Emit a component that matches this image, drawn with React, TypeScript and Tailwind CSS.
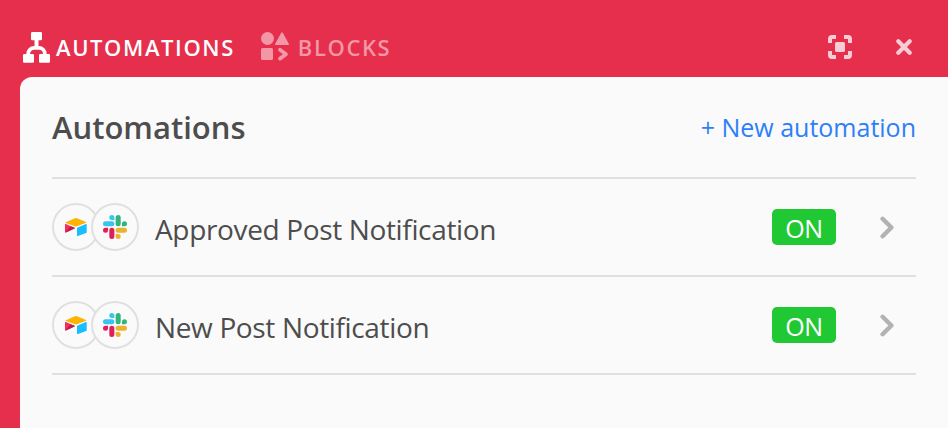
const FONT = "font-['Segoe_UI','Open_Sans','Noto_Sans',sans-serif]";

function AutomationsIcon() {
  return (
    <svg width="27" height="31" viewBox="0 0 27 31" fill="#fff">
      <rect x="8" y="0" width="11" height="8.3" rx="1.2" />
      <path d="M13.5 7v9" stroke="#fff" strokeWidth="4" />
      <path d="M5.2 23v-1.2a6 6 0 0 1 6-6h4.6a6 6 0 0 1 6 6V23" fill="none" stroke="#fff" strokeWidth="3.8" />
      <rect x="0" y="22" width="11" height="8.7" rx="1.2" />
      <rect x="16" y="22" width="11" height="8.7" rx="1.2" />
    </svg>
  );
}

function BlocksIcon() {
  return (
    <svg width="28" height="30" viewBox="0 0 28 30" fill="#f397a6">
      <circle cx="6.5" cy="6.5" r="6.5" />
      <path d="M21 1.2l6 11H15z" stroke="#f397a6" strokeWidth="1.8" strokeLinejoin="round" />
      <rect x="0" y="16" width="12" height="12" rx="1.5" />
      <path d="M19 17.8l6 4.4-6 4.4" fill="none" stroke="#f397a6" strokeWidth="3.8" strokeLinecap="round" strokeLinejoin="round" />
    </svg>
  );
}

function FocusIcon() {
  return (
    <svg width="24" height="24" viewBox="0 0 24 24" fill="none" stroke="#f8ccd4" strokeWidth="4">
      <path d="M2 8V4a2 2 0 0 1 2-2h4M16 2h4a2 2 0 0 1 2 2v4M22 16v4a2 2 0 0 1-2 2h-4M8 22H4a2 2 0 0 1-2-2v-4" />
      <rect x="7" y="7" width="10" height="10" rx="1.5" fill="#f8ccd4" stroke="none" />
    </svg>
  );
}

function CloseIcon() {
  return (
    <svg width="16" height="16" viewBox="0 0 16 16" fill="none" stroke="#f8ccd4" strokeWidth="4.2" strokeLinecap="round">
      <path d="M2.3 2.3l11.4 11.4M13.7 2.3L2.3 13.7" />
    </svg>
  );
}

function AirtableLogo() {
  return (
    <svg width="22" height="18" viewBox="0 0 22 18">
      <path d="M.8 4.2L10 .3q1-.4 2 0l9 3.6q.7.4 0 .8l-9 3.6q-1 .4-2 0L.8 5q-.7-.4 0-.8z" fill="#fcb400" />
      <path d="M12 10.3q0-.6.6-.9L21 6.1q.7-.2.7.5v7.6q0 .5-.5.7l-8.5 3.2q-.7.2-.7-.5z" fill="#18bfff" />
      <path d="M0 6.6q0-.8.8-.5l8.7 3.7q.8.4 0 .8L.9 14.4q-.9.4-.9-.5z" fill="#f82b60" />
      <path d="M.2 14.4l5.4-6.2 3.9 1.6q.8.4 0 .8L.9 14.4z" fill="#ba1e45" />
    </svg>
  );
}

function SlackLogo() {
  return (
    <svg width="24" height="24" viewBox="0 0 24 24">
      <path fill="#e01e5a" d="M5.042 15.165a2.528 2.528 0 0 1-2.52 2.523A2.528 2.528 0 0 1 0 15.165a2.527 2.527 0 0 1 2.522-2.52h2.52v2.52zM6.313 15.165a2.527 2.527 0 0 1 2.521-2.52 2.527 2.527 0 0 1 2.521 2.52v6.313A2.528 2.528 0 0 1 8.834 24a2.528 2.528 0 0 1-2.521-2.522v-6.313z" />
      <path fill="#36c5f0" d="M8.834 5.042a2.528 2.528 0 0 1-2.521-2.52A2.528 2.528 0 0 1 8.834 0a2.528 2.528 0 0 1 2.521 2.522v2.52H8.834zM8.834 6.313a2.528 2.528 0 0 1 2.521 2.521 2.528 2.528 0 0 1-2.521 2.521H2.522A2.528 2.528 0 0 1 0 8.834a2.528 2.528 0 0 1 2.522-2.521h6.312z" />
      <path fill="#2eb67d" d="M18.956 8.834a2.528 2.528 0 0 1 2.522-2.521A2.528 2.528 0 0 1 24 8.834a2.528 2.528 0 0 1-2.522 2.521h-2.522V8.834zM17.688 8.834a2.528 2.528 0 0 1-2.523 2.521 2.527 2.527 0 0 1-2.52-2.521V2.522A2.527 2.527 0 0 1 15.165 0a2.528 2.528 0 0 1 2.523 2.522v6.312z" />
      <path fill="#ecb22e" d="M15.165 18.956a2.528 2.528 0 0 1 2.523 2.522A2.528 2.528 0 0 1 15.165 24a2.527 2.527 0 0 1-2.52-2.522v-2.522h2.52zM15.165 17.688a2.527 2.527 0 0 1-2.52-2.523 2.526 2.526 0 0 1 2.52-2.52h6.313A2.527 2.527 0 0 1 24 15.165a2.528 2.528 0 0 1-2.522 2.523h-6.313z" />
    </svg>
  );
}

function AutomationRow({ name }: { name: string }) {
  return (
    <li className="flex h-[98px] items-center border-b-2 border-[#e0e0e0]">
      <div className="flex">
        <span className="flex size-12 items-center justify-center rounded-full border-2 border-[#e0e0e0]">
          <AirtableLogo />
        </span>
        <span className="-ml-[9px] flex size-12 items-center justify-center rounded-full border-2 border-[#e0e0e0] bg-[#fafafa]">
          <SlackLogo />
        </span>
      </div>
      <span className="ml-4 pt-[3px] text-[28px] leading-9 tracking-[-0.35px] whitespace-nowrap text-[#4d4d4d]">{name}</span>
      <span className="ml-auto flex h-9 w-16 items-center justify-center rounded-[5px] bg-[#20c933] pt-0.5 text-[25px] leading-9 tracking-[-0.3px] text-white">
        ON
      </span>
      <svg className="mr-[21px] ml-[44px]" width="15" height="23" viewBox="0 0 15 23" fill="none" stroke="#b2b2b2" strokeWidth="4.4" strokeLinecap="round" strokeLinejoin="round">
        <path d="M2.6 2.8l8.8 8.7-8.8 8.7" />
      </svg>
    </li>
  );
}

export default function App() {
  return (
    <div className={`flex h-[428px] w-[948px] flex-col overflow-hidden bg-[#e62e4d] pl-5 ${FONT}`}>
      <header className="flex h-[77px] items-center pt-[17px] pl-[3px]">
        <div className="flex items-center text-white">
          <AutomationsIcon />
          <span className="ml-[6px] text-[22px] leading-8 font-semibold tracking-[1.6px]">AUTOMATIONS</span>
        </div>
        <div className="ml-[26px] flex items-center text-[#f397a6]">
          <BlocksIcon />
          <span className="ml-[9px] text-[22px] leading-8 font-semibold tracking-[1.6px]">BLOCKS</span>
        </div>
        <div className="mr-9 ml-auto flex items-center gap-11">
          <FocusIcon />
          <CloseIcon />
        </div>
      </header>
      <main className="flex-1 rounded-tl-xl bg-[#fafafa] pr-8 pl-8">
        <div className="flex h-[102px] items-center justify-between border-b-2 border-[#e0e0e0]">
          <h1 className="text-[31px] leading-10 font-semibold text-[#4d4d4d]">Automations</h1>
          <button className="text-[25px] leading-8 font-medium whitespace-nowrap text-[#2d7ff9]">+ New automation</button>
        </div>
        <ul>
          <AutomationRow name="Approved Post Notification" />
          <AutomationRow name="New Post Notification" />
        </ul>
      </main>
    </div>
  );
}
